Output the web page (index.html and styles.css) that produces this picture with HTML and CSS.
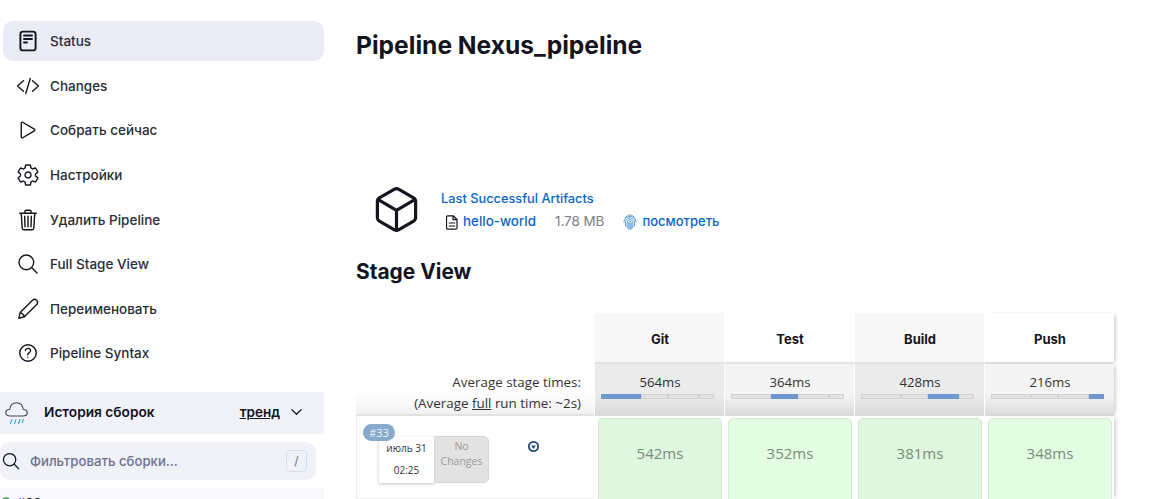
FILE: index.html
```html
<!DOCTYPE html>
<html lang="ru">
<head>
	<meta charset="UTF-8">
	<title>Nexus_pipeline</title>
	<link rel="stylesheet" href="styles.css">
</head>
<body>
<div class="page">
	<div class="side">
		<div class="task active">
			<svg class="ic ic_doc" viewBox="0 0 24 24"><rect x="4.400" y="2.600" width="15.200" height="18.800" rx="2.500"/><path d="M8 6.500h8M8 10h8M8 13.500h3"/></svg>
			<span>Status</span>
		</div>
		<div class="task">
			<svg class="ic" viewBox="0 0 512 512"><path d="M160 368 32 256l128-112M352 368l128-112-128-112M304 96l-96 320"/></svg>
			<span>Changes</span>
		</div>
		<div class="task">
			<svg class="ic" viewBox="0 0 512 512"><path d="M112 111v290c0 17.440 17 28.520 31 20.160l247.900-148.370c12.120-7.250 12.120-26.330 0-33.580L143 90.840c-14-8.360-31 2.720-31 20.160z"/></svg>
			<span>Собрать сейчас</span>
		</div>
		<div class="task">
			<svg class="ic" viewBox="0 0 512 512"><path d="M262.290 192.310a64 64 0 1057.400 57.400 64.130 64.130 0 00-57.400-57.400zM416.390 256a154.340 154.340 0 01-1.530 20.790l45.210 35.460a10.810 10.810 0 012.450 13.750l-42.770 74a10.810 10.810 0 01-13.140 4.590l-44.900-18.080a16.110 16.110 0 00-15.170 1.750A164.480 164.480 0 01325 400.800a15.940 15.940 0 00-8.820 12.140l-6.730 47.890a11.080 11.080 0 01-10.680 9.170h-85.540a11.110 11.110 0 01-10.690-8.870l-6.720-47.820a16.070 16.070 0 00-9-12.220 155.300 155.300 0 01-21.460-12.570 16 16 0 00-15.110-1.710l-44.890 18.070a10.810 10.810 0 01-13.140-4.580l-42.770-74a10.800 10.800 0 012.450-13.750l38.210-30a16.050 16.050 0 006-14.080c-.36-4.170-.58-8.330-.58-12.500s.21-8.270.58-12.350a16 16 0 00-6.070-13.940l-38.190-30A10.810 10.810 0 0149.480 186l42.770-74a10.810 10.810 0 0113.140-4.590l44.900 18.080a16.110 16.110 0 0015.170-1.750A164.480 164.480 0 01187 111.200a15.940 15.940 0 008.820-12.140l6.730-47.890A11.080 11.080 0 01213.230 42h85.540a11.110 11.110 0 0110.690 8.870l6.720 47.820a16.070 16.070 0 009 12.220 155.300 155.300 0 0121.460 12.570 16 16 0 0015.110 1.710l44.890-18.070a10.810 10.810 0 0113.140 4.580l42.770 74a10.800 10.800 0 01-2.450 13.750l-38.210 30a16.050 16.050 0 00-6.050 14.080c.33 4.140.55 8.300.55 12.470z"/></svg>
			<span>Настройки</span>
		</div>
		<div class="task">
			<svg class="ic" viewBox="0 0 512 512"><path d="M112 112l20 320c.95 18.490 14.400 32 32 32h184c17.670 0 30.870-13.510 32-32l20-320M80 112h352M192 112V72a23.930 23.930 0 0124-24h80a23.930 23.930 0 0124 24v40M256 176v224M184 176l8 224M328 176l-8 224"/></svg>
			<span>Удалить Pipeline</span>
		</div>
		<div class="task">
			<svg class="ic" viewBox="0 0 512 512"><path d="M221.090 64a157.090 157.090 0 10157.090 157.090A157.100 157.100 0 00221.090 64zM338.290 338.290 448 448"/></svg>
			<span>Full Stage View</span>
		</div>
		<div class="task">
			<svg class="ic ic_pen" viewBox="0 0 24 24"><path d="M2.800 21.200l1.400-5.600L16.500 3.300c1.200-1.200 3-1.200 4.200 0s1.200 3 0 4.200L8.400 19.800zM4.200 15.600c1.800.3 3.900 2.400 4.200 4.200"/></svg>
			<span>Переименовать</span>
		</div>
		<div class="task">
			<svg class="ic" viewBox="0 0 512 512"><path d="M256 80a176 176 0 10176 176A176 176 0 00256 80zM200 202.290s.84-17.500 19.570-32.570C230.680 160.770 244 158.180 256 158c10.930-.14 20.690 1.670 26.530 4.450 10 4.760 29.470 16.380 29.470 41.090 0 26-17 37.810-36.370 50.800S251 281.430 251 296M250 348v1"/></svg>
			<span>Pipeline Syntax</span>
		</div>

		<div class="hist_head">
			<svg class="weather" viewBox="0 0 23 24"><path class="cloud" d="M5 14C2.500 14 .8 12.600 .8 10.700S2.500 7.500 4.600 7.500C5.300 3.500 8 .8 11.500 .8s6.200 2.700 6.900 6.700c2.100 0 3.800 1.300 3.800 3.200S20.500 14 18 14z"/><path class="rain" d="M7 17.500l-1.500 4M11 17.500l-1.500 4M15 17.500l-1.500 4M18.500 17.500l-1.500 3"/></svg>
			<span class="hist_title">История сборок</span>
			<span class="trend">тренд</span>
			<svg class="chev" viewBox="0 0 12 8"><path d="M1 1.500 6 6.500 11 1.500"/></svg>
		</div>
		<div class="filter">
			<svg class="ic_small" viewBox="0 0 512 512"><path d="M221.090 64a157.090 157.090 0 10157.090 157.090A157.100 157.100 0 00221.090 64zM338.290 338.290 448 448"/></svg>
			<span class="filter_text">Фильтровать сборки...</span>
			<span class="key">/</span>
		</div>
		<div class="build_row">
			<svg class="ok" viewBox="0 0 12 12"><circle cx="6" cy="6" r="5"/></svg>
			<span>#33</span>
		</div>
	</div>

	<div class="main">
		<h1>Pipeline Nexus_pipeline</h1>
		<div class="artifacts">
			<svg class="box_ic" viewBox="0 0 512 512"><path d="M448 341.370V170.610A32 32 0 00432.110 143l-152-88.460a47.940 47.940 0 00-48.240 0L79.890 143A32 32 0 0064 170.610v170.760A32 32 0 0079.890 369l152 88.460a48 48 0 0048.240 0l152-88.460A32 32 0 00448 341.370zM69 153.990l187 110 187-110M256 463.990v-200"/></svg>
			<div class="art_info">
				<a class="art_title">Last Successful Artifacts</a>
				<div class="art_row">
					<svg class="file_ic" viewBox="0 0 12 15"><path d="M1.800.8h5.400L11 4.500v8.200c0 .8-.6 1.500-1.500 1.500h-7.700c-.8 0-1.300-.7-1.300-1.500V2.300C.5 1.500 1 .8 1.800.8zM7 1v3.700h3.800M3.200 8h5.600M3.200 11h5.600"/></svg>
					<a class="art_name">hello-world</a>
					<span class="size">1.78 MB</span>
					<svg class="print_ic" viewBox="0 0 14 16"><path d="M2.500 3.500C3.800 2 5.300 1 7 1s3.200 1 4.500 2.500M1 8c0-3.300 2.700-5.500 6-5.500S13 4.700 13 8M2.500 12V8.500c0-2.500 2-4.500 4.500-4.500s4.500 2 4.500 4.500v3.500M4.200 14V8.500C4.200 7 5.500 5.700 7 5.700S9.800 7 9.800 8.500V14M5.800 15V8.700c0-.7.500-1.200 1.200-1.200s1.200.5 1.200 1.200V15M7 9.500V15.500"/></svg>
					<a>посмотреть</a>
				</div>
			</div>
		</div>
		<h2>Stage View</h2>

		<div class="stage">
			<div class="corner"></div>
			<div class="head odd">Git</div>
			<div class="head">Test</div>
			<div class="head odd">Build</div>
			<div class="head last">Push</div>

			<div class="avg_label">
				<div>Average stage times:</div>
				<div>(Average <u>full</u> run time: ~2s)</div>
			</div>
			<div class="avg odd">
				<div>564ms</div>
				<div class="bar"><i class="blue" style="width: 40px"></i><i class="seg" style="width: 27px"></i><i class="seg" style="width: 31px"></i><i class="seg"></i></div>
			</div>
			<div class="avg">
				<div>364ms</div>
				<div class="bar"><i class="seg" style="width: 40px"></i><i class="blue" style="width: 27px"></i><i class="seg" style="width: 31px"></i><i class="seg"></i></div>
			</div>
			<div class="avg odd">
				<div>428ms</div>
				<div class="bar"><i class="seg" style="width: 40px"></i><i class="seg" style="width: 27px"></i><i class="blue" style="width: 31px"></i><i class="seg"></i></div>
			</div>
			<div class="avg last">
				<div>216ms</div>
				<div class="bar"><i class="seg" style="width: 40px"></i><i class="seg" style="width: 27px"></i><i class="seg" style="width: 31px"></i><i class="blue"></i></div>
			</div>

			<div class="run">
				<div class="run_card">
					<span class="badge">#33</span>
					<div class="date">
						<div>июль 31</div>
						<div>02:25</div>
					</div>
					<div class="nochange">No Changes</div>
				</div>
				<svg class="dl_ic" viewBox="0 0 12 12"><circle cx="6" cy="6" r="4.300"/><path class="dl_arrow" d="M3.900 5h4.200L6 8.200z"/></svg>
			</div>
			<div class="cell odd"><div class="inner">542ms</div></div>
			<div class="cell"><div class="inner">352ms</div></div>
			<div class="cell odd"><div class="inner">381ms</div></div>
			<div class="cell last"><div class="inner">348ms</div></div>
		</div>
	</div>
</div>
</body>
</html>
```

FILE: styles.css
```css
html, body{
	margin: 0;
	height: 499px;
	overflow: hidden;
	background: #fff;
}
body{
	font-family: Inter, "Noto Sans", sans-serif;
	color: #14141f;
}
.page{
	display: flex;
	height: 499px;
	overflow: hidden;
}
svg{
	flex: none;
	fill: none;
	stroke: #14141f;
	stroke-linecap: round;
	stroke-linejoin: round;
}

/* sidebar */
.side{
	flex: none;
	width: 324px;
	padding-top: 21.3px;
}
.task{
	display: flex;
	align-items: center;
	height: 40px;
	margin: 0 0 4.57px 3px;
	padding-left: 13px;
	border-radius: 10px;
	font-size: 13.5px;
	font-weight: 500;
	color: #2b2b36;
}
.task.active{
	background: #ebebf5;
}
.ic{
	width: 24px;
	height: 24px;
	margin-right: 10px;
	stroke-width: 30;
}
.ic_doc{
	stroke-width: 1.900;
}
.ic_pen{
	stroke-width: 1.400;
}
.hist_head{
	display: flex;
	align-items: center;
	box-sizing: border-box;
	height: 42px;
	margin-top: 18.4px;
	padding: 0 0 2px 5px;
	background: #f1f1f8;
}
.weather{
	width: 23px;
	height: 24px;
	margin: 4px 16px 0 0;
	stroke-width: 1.100;
}
.cloud{
	stroke: #3f4450;
}
.rain{
	stroke: #2ea3dc;
}
.hist_title{
	flex: 1;
	font-size: 13.7px;
	font-weight: 600;
}
.trend{
	font-size: 13.5px;
	font-weight: 600;
	text-decoration: underline;
}
.chev{
	width: 11px;
	height: 8px;
	margin: 0 22px 0 11px;
	stroke-width: 1.300;
}
.filter{
	display: flex;
	align-items: center;
	width: 316px;
	height: 38px;
	margin-top: 8px;
	box-sizing: border-box;
	padding: 0 9px 0 1px;
	background: #f1f1f8;
	border-radius: 10px;
}
.ic_small{
	width: 20px;
	height: 20px;
	margin-right: 9px;
	stroke-width: 32;
}
.filter_text{
	flex: 1;
	font-size: 13.2px;
	font-weight: 500;
	color: #70708a;
}
.key{
	width: 19px;
	height: 20px;
	line-height: 20px;
	text-align: center;
	font-size: 12px;
	color: #70708a;
	border: 1px solid #dcdce6;
	border-radius: 4px;
}
.build_row{
	display: flex;
	align-items: center;
	gap: 5px;
	height: 30px;
	margin-top: 8px;
	background: #f9f9fb;
	font-size: 13px;
}
.ok{
	width: 12px;
	height: 12px;
	stroke: #2d9d5b;
	stroke-width: 1.500;
}

/* main */
.main{
	flex: 1;
	padding-left: 32px;
	min-width: 0;
}
h1{
	margin: 31px 0 0;
	font-size: 24.6px;
	line-height: 29px;
	font-weight: 700;
}
.artifacts{
	display: flex;
	align-items: flex-start;
	margin-top: 124px;
	padding-left: 15px;
}
.box_ic{
	width: 51px;
	height: 51px;
	margin-right: 19px;
	stroke-width: 32;
}
.art_info{
	padding-top: 7px;
	font-size: 13px;
	font-weight: 500;
	color: #0b66c3;
}
.art_title{
	display: block;
	font-size: 12.8px;
	line-height: 16px;
}
.art_row{
	display: flex;
	align-items: center;
	margin-top: 5px;
	padding-left: 5px;
	line-height: 16px;
}
.file_ic{
	width: 12px;
	height: 15px;
	margin: 2px 5px 0 0;
	stroke-width: 1.200;
}
.art_name{
	font-size: 13.4px;
}
.size{
	margin: 0 19px;
	font-size: 13.4px;
	font-weight: 400;
	color: #7c7c8c;
}
.print_ic{
	width: 14px;
	height: 16px;
	margin: 2px 5px 0 0;
	stroke: #2f80c9;
	stroke-width: .8;
}
h2{
	margin: 24px 0 0;
	font-size: 20.9px;
	line-height: 25px;
	font-weight: 700;
}

/* stage table */
.stage{
	display: grid;
	grid-template-columns: 238px repeat(4, 130px);
	grid-template-rows: 51px 52px 83px;
	margin-top: 29px;
	width: 759px;
	font-family: "Open Sans", sans-serif;
	font-size: 13.2px;
	color: #333;
}
.head{
	display: flex;
	align-items: center;
	justify-content: center;
	box-sizing: border-box;
	padding: 3px 0 0 1px;
	border-left: 1px solid #fff;
	border-bottom: 2px solid #e2e2e2;
	font-family: Inter, sans-serif;
	font-size: 13px;
	font-weight: 700;
	color: #14141f;
	background: #fff;
}
.head.odd{
	background: #f7f7f7;
}
.last{
	box-shadow: 3px 0 4px -2px rgba(0,0,0,.25);
}
.avg_label{
	box-sizing: border-box;
	padding: 8px 13px 0 0;
	font-size: 13.4px;
	text-align: right;
	line-height: 21px;
	background: linear-gradient(#fff 55%, #f1f1f1);
	border-bottom: 2px solid #e2e2e2;
}
.avg{
	box-sizing: border-box;
	padding: 9px 0 0 1px;
	text-align: center;
	line-height: 18px;
	border-left: 1px solid #fff;
	background: linear-gradient(#f4f4f4 60%, #d9d9d9);
}
.avg.odd{
	background: linear-gradient(#ebebeb 60%, #d9d9d9);
}
.bar{
	display: flex;
	height: 5px;
	margin: 3px 10px 0 5px;
}
.bar i{
	display: block;
	box-sizing: border-box;
}
.bar .seg{
	background: #e3e3e3;
	border: 1px solid #d2d2d2;
}
.bar .seg:last-child, .bar .blue:last-child{
	flex: 1;
}
.bar .blue{
	background: #6f97cd;
}
.run{
	display: flex;
	align-items: flex-start;
	box-sizing: border-box;
	border-left: 1px solid #eee;
	border-bottom: 1px solid #eee;
}
.run_card{
	position: relative;
	display: flex;
	margin: 21px 0 0 22px;
	height: 46px;
}
.badge{
	position: absolute;
	left: -16px;
	top: -13px;
	z-index: 1;
	width: 32px;
	height: 17px;
	line-height: 17px;
	text-align: center;
	border-radius: 9px;
	background: #87a9cc;
	font-size: 11px;
	color: #eef3f8;
}
.date{
	width: 55px;
	text-align: center;
	font-size: 10px;
	line-height: 22px;
	background: #fff;
	box-shadow: 0 1px 3px rgba(0,0,0,.25);
}
.nochange{
	width: 55px;
	margin-top: -1px;
	padding-top: 2px;
	box-sizing: border-box;
	text-align: center;
	font-size: 10.500px;
	line-height: 15px;
	color: #9a9a9a;
	background: #e2e2e2;
	border: 1px solid #d6d6d6;
	border-radius: 0 5px 5px 0;
}
.dl_ic{
	width: 13px;
	height: 13px;
	margin: 24px 0 0 38px;
	stroke: #244a7d;
	stroke-width: 1.700;
}
.dl_arrow{
	fill: #244a7d;
	stroke: none;
}
.cell{
	box-sizing: border-box;
	padding: 2px 2px 0 3px;
	border-left: 1px solid #fff;
}
.inner{
	height: 100px;
	box-sizing: border-box;
	padding-top: 24px;
	text-align: center;
	font-size: 15px;
	line-height: 20px;
	color: #7b8a7b;
	background: #e3fde3;
	border: 1px solid #d4e8d4;
	border-radius: 5px;
}
.cell.odd .inner{
	background: #dff6df;
}
```
